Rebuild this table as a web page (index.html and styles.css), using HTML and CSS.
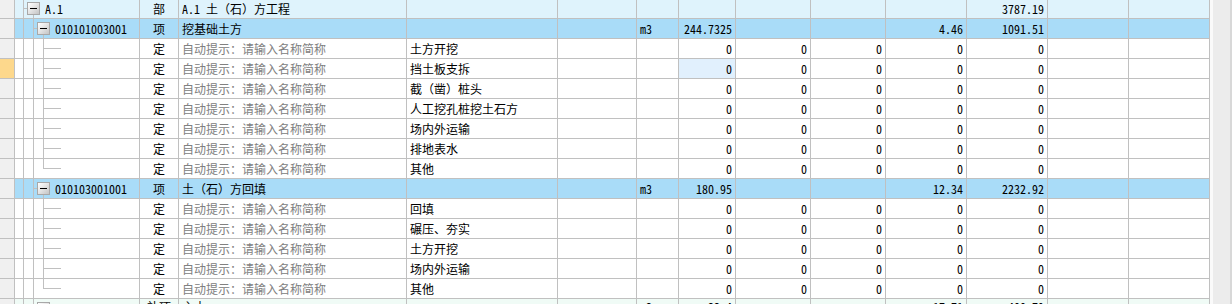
FILE: index.html
```html
<!DOCTYPE html>
<html lang="zh">
<head>
<meta charset="utf-8">
<title>分部分项</title>
<link rel="stylesheet" href="styles.css">
</head>
<body>
<div class="page">
  <div class="grid">
    <div class="row bu">
      <div class="c rh"></div>
      <div class="c tree"><span class="g tee9"></span><span class="node"><span class="box"></span></span><span class="code">A.1</span></div>
      <div class="c ctr">部</div>
      <div class="c">A.1 土（石）方工程</div>
      <div class="c"></div><div class="c"></div><div class="c"></div><div class="c r"></div>
      <div class="c r"></div><div class="c r"></div><div class="c r"></div><div class="c r">3787.19</div>
      <div class="c"></div><div class="c"></div>
    </div>

    <div class="row xiang">
      <div class="c rh"></div>
      <div class="c tree"><span class="g pipe"></span><span class="g tee9"></span><span class="node"><span class="box"></span></span><span class="code">010101003001</span></div>
      <div class="c ctr">项</div>
      <div class="c">挖基础土方</div>
      <div class="c"></div><div class="c"></div><div class="c">m3</div><div class="c r">244.7325</div>
      <div class="c r"></div><div class="c r"></div><div class="c r">4.46</div><div class="c r">1091.51</div>
      <div class="c"></div><div class="c"></div>
    </div>

    <div class="row ding">
      <div class="c rh"></div>
      <div class="c tree"><span class="g pipe"></span><span class="g pipe"></span><span class="g leaf tee"></span></div>
      <div class="c ctr">定</div>
      <div class="c hint">自动提示：请输入名称简称</div>
      <div class="c">土方开挖</div><div class="c"></div><div class="c"></div><div class="c r">0</div>
      <div class="c r">0</div><div class="c r">0</div><div class="c r">0</div><div class="c r">0</div>
      <div class="c"></div><div class="c"></div>
    </div>

    <div class="row ding">
      <div class="c rh cur"></div>
      <div class="c tree"><span class="g pipe"></span><span class="g pipe"></span><span class="g leaf tee"></span></div>
      <div class="c ctr">定</div>
      <div class="c hint">自动提示：请输入名称简称</div>
      <div class="c">挡土板支拆</div><div class="c"></div><div class="c"></div><div class="c r sel">0</div>
      <div class="c r">0</div><div class="c r">0</div><div class="c r">0</div><div class="c r">0</div>
      <div class="c"></div><div class="c"></div>
    </div>

    <div class="row ding">
      <div class="c rh"></div>
      <div class="c tree"><span class="g pipe"></span><span class="g pipe"></span><span class="g leaf tee"></span></div>
      <div class="c ctr">定</div>
      <div class="c hint">自动提示：请输入名称简称</div>
      <div class="c">截（凿）桩头</div><div class="c"></div><div class="c"></div><div class="c r">0</div>
      <div class="c r">0</div><div class="c r">0</div><div class="c r">0</div><div class="c r">0</div>
      <div class="c"></div><div class="c"></div>
    </div>

    <div class="row ding">
      <div class="c rh"></div>
      <div class="c tree"><span class="g pipe"></span><span class="g pipe"></span><span class="g leaf tee"></span></div>
      <div class="c ctr">定</div>
      <div class="c hint">自动提示：请输入名称简称</div>
      <div class="c">人工挖孔桩挖土石方</div><div class="c"></div><div class="c"></div><div class="c r">0</div>
      <div class="c r">0</div><div class="c r">0</div><div class="c r">0</div><div class="c r">0</div>
      <div class="c"></div><div class="c"></div>
    </div>

    <div class="row ding">
      <div class="c rh"></div>
      <div class="c tree"><span class="g pipe"></span><span class="g pipe"></span><span class="g leaf tee"></span></div>
      <div class="c ctr">定</div>
      <div class="c hint">自动提示：请输入名称简称</div>
      <div class="c">场内外运输</div><div class="c"></div><div class="c"></div><div class="c r">0</div>
      <div class="c r">0</div><div class="c r">0</div><div class="c r">0</div><div class="c r">0</div>
      <div class="c"></div><div class="c"></div>
    </div>

    <div class="row ding">
      <div class="c rh"></div>
      <div class="c tree"><span class="g pipe"></span><span class="g pipe"></span><span class="g leaf tee"></span></div>
      <div class="c ctr">定</div>
      <div class="c hint">自动提示：请输入名称简称</div>
      <div class="c">排地表水</div><div class="c"></div><div class="c"></div><div class="c r">0</div>
      <div class="c r">0</div><div class="c r">0</div><div class="c r">0</div><div class="c r">0</div>
      <div class="c"></div><div class="c"></div>
    </div>

    <div class="row ding">
      <div class="c rh"></div>
      <div class="c tree"><span class="g pipe"></span><span class="g pipe"></span><span class="g leaf elbow"></span></div>
      <div class="c ctr">定</div>
      <div class="c hint">自动提示：请输入名称简称</div>
      <div class="c">其他</div><div class="c"></div><div class="c"></div><div class="c r">0</div>
      <div class="c r">0</div><div class="c r">0</div><div class="c r">0</div><div class="c r">0</div>
      <div class="c"></div><div class="c"></div>
    </div>

    <div class="row xiang">
      <div class="c rh"></div>
      <div class="c tree"><span class="g pipe"></span><span class="g tee9"></span><span class="node"><span class="box"></span></span><span class="code">010103001001</span></div>
      <div class="c ctr">项</div>
      <div class="c">土（石）方回填</div>
      <div class="c"></div><div class="c"></div><div class="c">m3</div><div class="c r">180.95</div>
      <div class="c r"></div><div class="c r"></div><div class="c r">12.34</div><div class="c r">2232.92</div>
      <div class="c"></div><div class="c"></div>
    </div>

    <div class="row ding">
      <div class="c rh"></div>
      <div class="c tree"><span class="g pipe"></span><span class="g pipe"></span><span class="g leaf tee"></span></div>
      <div class="c ctr">定</div>
      <div class="c hint">自动提示：请输入名称简称</div>
      <div class="c">回填</div><div class="c"></div><div class="c"></div><div class="c r">0</div>
      <div class="c r">0</div><div class="c r">0</div><div class="c r">0</div><div class="c r">0</div>
      <div class="c"></div><div class="c"></div>
    </div>

    <div class="row ding">
      <div class="c rh"></div>
      <div class="c tree"><span class="g pipe"></span><span class="g pipe"></span><span class="g leaf tee"></span></div>
      <div class="c ctr">定</div>
      <div class="c hint">自动提示：请输入名称简称</div>
      <div class="c">碾压、夯实</div><div class="c"></div><div class="c"></div><div class="c r">0</div>
      <div class="c r">0</div><div class="c r">0</div><div class="c r">0</div><div class="c r">0</div>
      <div class="c"></div><div class="c"></div>
    </div>

    <div class="row ding">
      <div class="c rh"></div>
      <div class="c tree"><span class="g pipe"></span><span class="g pipe"></span><span class="g leaf tee"></span></div>
      <div class="c ctr">定</div>
      <div class="c hint">自动提示：请输入名称简称</div>
      <div class="c">土方开挖</div><div class="c"></div><div class="c"></div><div class="c r">0</div>
      <div class="c r">0</div><div class="c r">0</div><div class="c r">0</div><div class="c r">0</div>
      <div class="c"></div><div class="c"></div>
    </div>

    <div class="row ding">
      <div class="c rh"></div>
      <div class="c tree"><span class="g pipe"></span><span class="g pipe"></span><span class="g leaf tee"></span></div>
      <div class="c ctr">定</div>
      <div class="c hint">自动提示：请输入名称简称</div>
      <div class="c">场内外运输</div><div class="c"></div><div class="c"></div><div class="c r">0</div>
      <div class="c r">0</div><div class="c r">0</div><div class="c r">0</div><div class="c r">0</div>
      <div class="c"></div><div class="c"></div>
    </div>

    <div class="row ding">
      <div class="c rh"></div>
      <div class="c tree"><span class="g pipe"></span><span class="g pipe"></span><span class="g leaf elbow"></span></div>
      <div class="c ctr">定</div>
      <div class="c hint">自动提示：请输入名称简称</div>
      <div class="c">其他</div><div class="c"></div><div class="c"></div><div class="c r">0</div>
      <div class="c r">0</div><div class="c r">0</div><div class="c r">0</div><div class="c r">0</div>
      <div class="c"></div><div class="c"></div>
    </div>

    <div class="row buxiang">
      <div class="c rh"></div>
      <div class="c tree"><span class="g pipe"></span><span class="g tee9"></span><span class="node"><span class="box"></span></span><span class="code"></span></div>
      <div class="c ctr">补项</div>
      <div class="c">主土</div>
      <div class="c"></div><div class="c"></div><div class="c">m3</div><div class="c r">33.4</div>
      <div class="c r"></div><div class="c r"></div><div class="c r">17.71</div><div class="c r">400.79</div>
      <div class="c"></div><div class="c"></div>
    </div>
  </div>
  <div class="vscroll"></div>
</div>
</body>
</html>
```

FILE: styles.css
```css
html, body {
  margin: 0;
  padding: 0;
  background: #ffffff;
}

body {
  font-family: "Noto Sans Mono CJK SC", "Noto Sans CJK SC", "DejaVu Sans Mono", monospace;
  font-size: 12px;
  color: #000000;
}

.page {
  display: flex;
  width: 1232px;
  height: 304px;
  overflow: hidden;
}

.grid {
  width: 1210px;
  flex: none;
  display: flex;
  flex-direction: column;
  margin-top: -1px;
}

.row {
  display: grid;
  grid-template-columns: 15px 125px 39px 228px 151px 79px 42px 57px 75px 75px 81px 81px 81px 81px;
  height: 20px;
  flex: none;
  box-sizing: border-box;
  border-bottom: 1px solid #c0c0c0;
}

.c {
  box-sizing: border-box;
  border-right: 1px solid #c0c0c0;
  padding: 0 3px;
  line-height: 19px;
  height: 19px;
  white-space: nowrap;
  overflow: hidden;
}

.r { text-align: right; }
.ctr { text-align: center; padding: 0; }
.hint { color: #808080; }

.rh {
  background: #f0f0f0;
  padding: 0;
}
.rh.cur { background: #fdd88c; }

.bu .c:not(.rh) { background: #dff3fc; }
.xiang .c:not(.rh) { background: #a9dcf8; }
.ding .c:not(.rh) { background: #ffffff; }
.buxiang .c:not(.rh) { background: #f0fbf6; }
.ding .c.sel { background: #e1f0fd; }

.buxiang .c { line-height: 15px; }

.tree {
  display: flex;
  align-items: stretch;
  padding: 0 0 0 3px;
}

.g {
  flex: none;
  width: 10px;
  height: 19px;
}

.g.pipe {
  background: linear-gradient(#c0c0c0, #c0c0c0) 5px 0 / 1px 100% no-repeat;
}

.g.tee9 {
  width: 9px;
  background:
    linear-gradient(#c0c0c0, #c0c0c0) 5px 0 / 1px 100% no-repeat,
    linear-gradient(#c0c0c0, #c0c0c0) 5px 9px / 4px 1px no-repeat;
}

.g.leaf { width: 23px; }

.g.leaf.tee {
  background:
    linear-gradient(#c0c0c0, #c0c0c0) 5px 0 / 1px 100% no-repeat,
    linear-gradient(#c0c0c0, #c0c0c0) 5px 9px / 18px 1px no-repeat;
}

.g.leaf.elbow {
  background:
    linear-gradient(#c0c0c0, #c0c0c0) 5px 0 / 1px 10px no-repeat,
    linear-gradient(#c0c0c0, #c0c0c0) 5px 9px / 18px 1px no-repeat;
}

.node {
  flex: none;
  width: 13px;
  height: 19px;
  display: flex;
  flex-direction: column;
  background: linear-gradient(#c0c0c0, #c0c0c0) 6px 15px / 1px 100% no-repeat;
}

.box {
  margin-top: 3px;
  width: 13px;
  height: 13px;
  box-sizing: border-box;
  border: 1px solid #a8a8a8;
  background:
    linear-gradient(#000000, #000000) 2px 5px / 7px 1px no-repeat,
    linear-gradient(135deg, #ffffff 0%, #e6e6e6 45%, #c4c4c4 100%);
}

.code {
  padding-left: 5px;
  line-height: 19px;
}

.vscroll {
  width: 22px;
  flex: none;
  box-sizing: border-box;
  background: #ececec;
  border-left: 3px solid #fafafa;
  border-right: 2px solid #d8d8d8;
}
```
